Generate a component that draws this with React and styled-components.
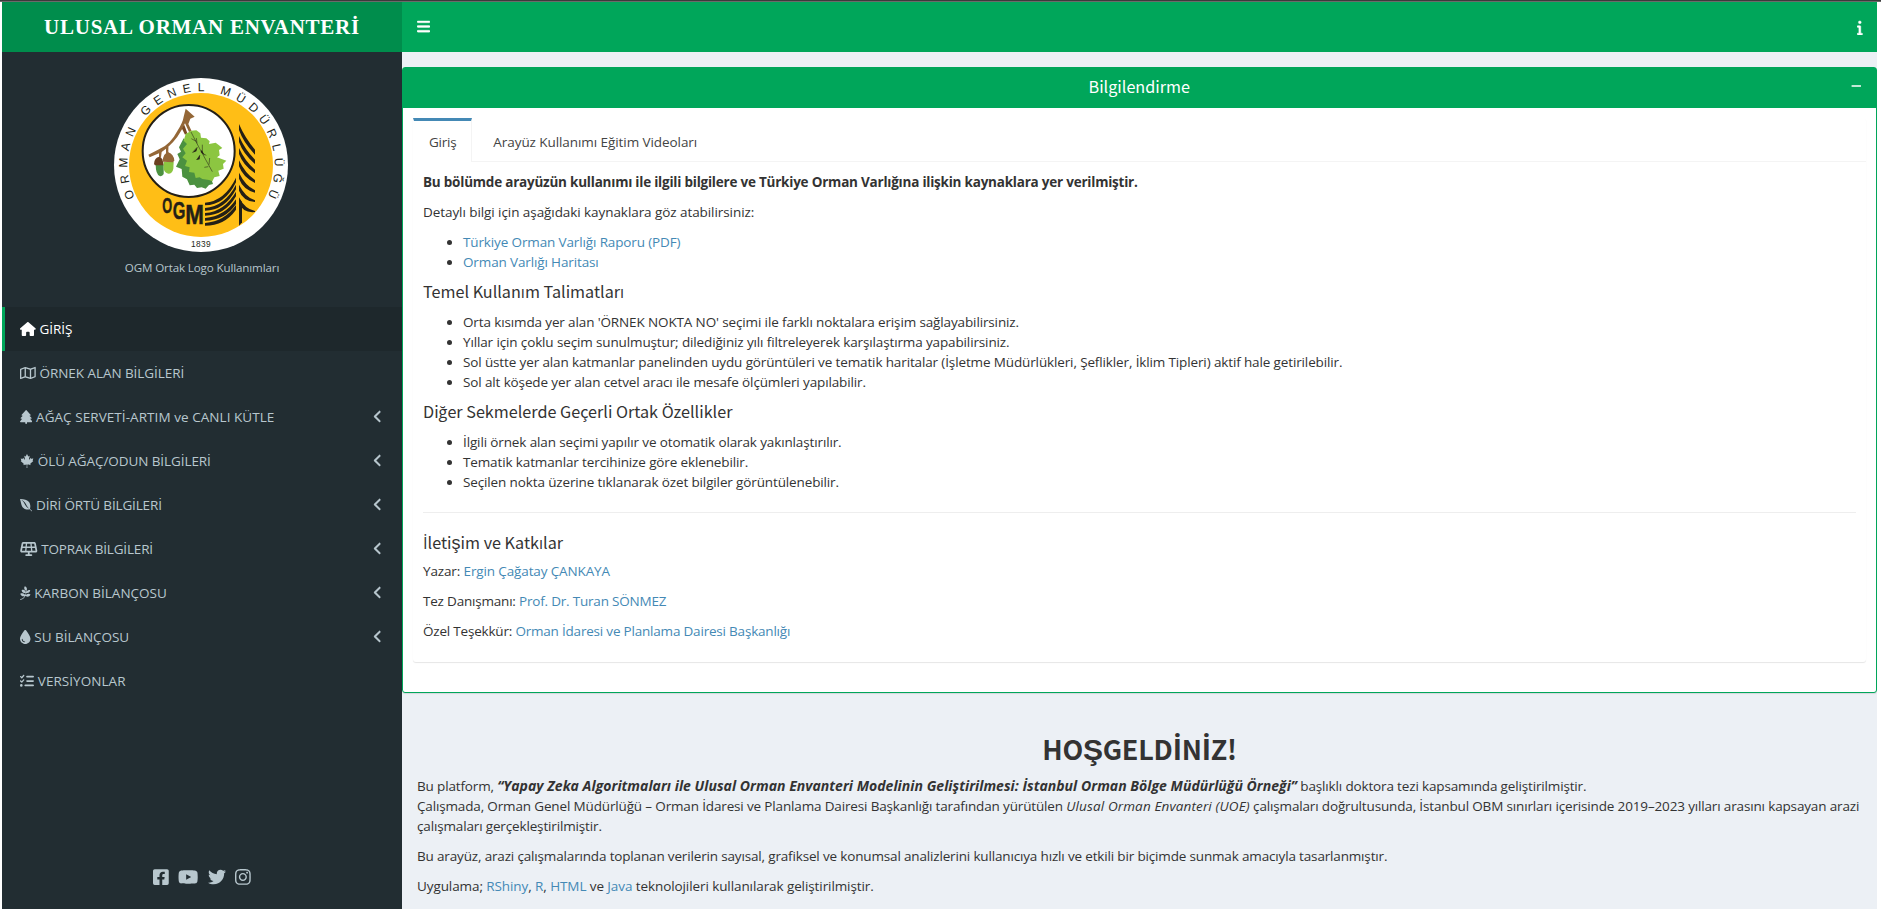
import React from "react";
import styled, { createGlobalStyle } from "styled-components";
import {
  FaBars, FaInfo, FaMinus, FaHouse, FaRegMap, FaTree, FaCanadianMapleLeaf, FaEnvira,
  FaSolarPanel, FaPagelines, FaDroplet, FaListCheck, FaAngleLeft, FaYoutube, FaTwitter, FaInstagram,
} from "react-icons/fa6";
import { FaFacebookSquare } from "react-icons/fa";

const body = '"Open Sans", "Noto Sans", sans-serif';
const display = '"Noto Sans CJK JP", "Open Sans", sans-serif';

const GlobalStyle = createGlobalStyle`
  * { box-sizing: border-box; }
  body {
    margin: 0;
    height: 909px;
    overflow: hidden;
    background: #fff;
    color: #333;
    font: 13.5px/20px ${body};
    letter-spacing: -0.13px;
  }
`;

const Page = styled.div`
  height: 909px;
  display: flex;
  flex-direction: column;
  padding: 0 4px 0 2px;
`;
const TopEdge = styled.div`
  flex: none;
  height: 2px;
  margin: 0 -4px 0 -2px;
  background: #3b3b3b;
  border-bottom: 1px solid #6a6a6a;
`;
const Header = styled.header`
  flex: none;
  height: 50px;
  display: flex;
  background: #00a65a;
  color: #fff;
`;
const Brand = styled.div`
  width: 400px;
  background: #008d4c;
  text-align: center;
  font: 700 21px/50px "Liberation Serif", serif;
  letter-spacing: 0.74px;
`;
const NavBar = styled.nav`
  flex: 1;
  display: flex;
  align-items: center;
  justify-content: space-between;
  padding: 0 14px 0 15px;
`;
/* $units is the glyph's viewBox width on its 512-unit height */
const Glyph = styled.span`
  display: inline-flex;
  svg {
    display: block;
    width: ${(p) => ((p.$size || 14) * (p.$units || 512)) / 512}px;
    height: ${(p) => p.$size || 14}px;
  }
`;
const MenuToggle = styled(Glyph)`
  margin-bottom: 1px;
  svg {
    stroke: currentColor;
    stroke-width: 12;
  }
`;
const InfoGlyph = styled(Glyph)`
  svg {
    stroke: currentColor;
    stroke-width: 16;
  }
`;
const Chevron = styled(Glyph)`
  margin-bottom: 2px;
  svg {
    stroke: currentColor;
    stroke-width: 8;
  }
`;
const Main = styled.div`
  flex: 1;
  min-height: 0;
  display: flex;
`;

/* Sidebar */
const Sidebar = styled.aside`
  width: 400px;
  flex: none;
  display: flex;
  flex-direction: column;
  background: #222d32;
  color: #b8c7ce;
`;
const LogoPanel = styled.div`
  height: 255px;
  padding-top: 25px;
  display: flex;
  flex-direction: column;
  align-items: center;
`;
const LogoArt = styled.svg`
  width: 176px;
  height: 176px;
  margin-right: 2px;
`;
const Caption = styled.div`
  margin-top: 5px;
  font-size: 11.6px;
  letter-spacing: -0.13px;
`;
const Menu = styled.ul`
  list-style: none;
  margin: 0;
  padding: 0;
`;
const MenuItem = styled.li`
  height: 44px;
  display: flex;
  align-items: center;
  gap: 3.8px;
  padding: 0 20px 0 15px;
  border-left: 3px solid ${(p) => (p.$active ? "#00a65a" : "transparent")};
  background: ${(p) => (p.$active ? "#1e282c" : "transparent")};
  color: ${(p) => (p.$active ? "#fff" : "#b8c7ce")};
`;
const MenuLabel = styled.span`
  flex: 1;
  line-height: 20px;
  letter-spacing: ${(p) => p.$track}px;
`;
const Social = styled.div`
  margin-top: auto;
  margin-bottom: 23px;
  display: flex;
  justify-content: center;
  gap: 9.3px;
`;

/* Content */
const Content = styled.main`
  flex: 1;
  min-width: 0;
  background: #ecf0f5;
  padding-top: 15px;
`;
const Box = styled.section`
  height: 626px;
  border: 1px solid #00a65a;
  border-radius: 3px;
  background: #fff;
  box-shadow: 0 1px 1px rgba(0, 0, 0, 0.1);
`;
const BoxHeader = styled.div`
  height: 40px;
  display: flex;
  align-items: center;
  padding: 0 15px 4px;
  background: #00a65a;
  color: #fff;
`;
const BoxTitle = styled.h3`
  flex: 1;
  margin: 0 0 0 10px;
  text-align: center;
  font: 400 16.2px/20px ${display};
  letter-spacing: 0;
`;
const BoxBody = styled.div`
  padding: 10px;
`;
const Tabs = styled.div`
  height: 544px;
  border-radius: 3px;
  box-shadow: 0 1px 1px rgba(0, 0, 0, 0.1);
`;
const TabList = styled.div`
  display: flex;
  gap: 5px;
  height: 44px;
  border-bottom: 1px solid #f4f4f4;
`;
const Tab = styled.div`
  height: 44px;
  padding: 11px 15px 0;
  border: 1px solid transparent;
  border-top: 3px solid ${(p) => (p.$active ? "#4489b5" : "transparent")};
  border-right-color: ${(p) => (p.$active ? "#f4f4f4" : "transparent")};
  background: ${(p) => (p.$active ? "#fff" : "transparent")};
  border-bottom: 0;
  color: #444;
  letter-spacing: ${(p) => (p.$active ? -0.25 : -0.07)}px;
`;
const TabPane = styled.div`
  padding: 10px;
`;
const P = styled.p`
  margin: 0 0 10px;
  letter-spacing: ${(p) => p.$track ?? -0.13}px;
`;
const Strong = styled.strong`
  letter-spacing: -0.22px;
`;
const Emphasis = styled.em`
  letter-spacing: 0.13px;
`;
const Link = styled.a`
  color: #4489b5;
`;
const List = styled.ul`
  margin: 0 0 10px;
  padding-left: 40px;
`;
const H4 = styled.h4`
  height: 19.8px;
  margin: 0 0 10px;
  font: 400 16.2px/18px ${display};
  letter-spacing: 0;
`;
const ContactHeading = styled(H4)`
  margin-bottom: 9px;
`;
const Alt = styled.span`
  font-family: ${(p) => p.$f || '"Liberation Sans"'}, sans-serif;
  font-size: ${(p) => p.$size}px;
  line-height: 1;
`;
const Rule = styled.hr`
  height: 1px;
  margin: 20px 0;
  border: 0;
  background: #eee;
`;
const Welcome = styled.section`
  padding: 39px 15px 0;
`;
const WelcomeTitle = styled.h2`
  margin: 0 0 10px;
  text-align: center;
  font: 700 27px/34px ${display};
  letter-spacing: -0.25px;
`;
const ThesisTitle = styled.em`
  font-weight: 700;
  font-size: 14px;
  letter-spacing: 0.03px;
`;

const INK = "#231f16";

function Logo() {
  const right = [168, 204, 240, 277, 314, 350, 388];
  const left = [
    [402, 330], [418, 351], [433, 372], [448, 395], [463, 412],
  ];
  return (
    <LogoArt viewBox="40 21 528 528">
      <defs>
        <path id="ring" d="M107 385 A221 221 0 1 1 501 385" />
      </defs>
      <circle cx="304" cy="285" r="261" fill="#fff" />
      <circle cx="304" cy="285" r="216" fill="#ffbe16" />
      <text fontFamily="Liberation Sans, sans-serif" fontSize="36" fill={INK}>
        <textPath href="#ring" startOffset="3" textLength="892" lengthAdjust="spacing">ORMAN GENEL MÜDÜRLÜĞÜ</textPath>
      </text>
      <circle cx="267" cy="243" r="138" fill="#fff" stroke={INK} strokeWidth="6" />
      <path fill="#4b9140" d="M252 205 L238 232 L244 245 L233 252 L240 268 L229 290 L246 297 L248 320 L262 328 L270 346 L284 344 L292 354 L306 352 L318 356 L328 345 L340 342 L334 325 L290 280 L262 215z" />
      <path fill="#7a4a22" d="M244 170 L256 194 L263 190 L254 165z" />
      <path fill="#946737" d="M258 116 L285 140 L272 146 L266 162 L276 184 L268 186 L256 160 Q236 205 206 230 L205 238 L199 236 L186 246 L184 262 L178 262 L178 250 L150 262 L146 254 L178 238 Q212 224 233 183 Q250 156 252 140z" />
      <path fill="#8cc641" d="M258 192 L275 182 L290 181 L302 190 L304 203 L320 205 L330 214 L328 222 L348 218 L358 226 L368 234 L358 240 L360 256 L352 262 L380 272 L370 282 L372 296 L356 302 L360 318 L344 322 L338 334 L328 330 L308 327 L300 322 L288 324 L284 308 L268 306 L270 292 L256 288 L262 272 L248 262 L258 250 L250 236 L262 222 L252 212z" />
      <path fill="none" stroke={INK} strokeWidth="1.6" d="M274 186 L300 236 L338 305 M275 206 L290 214 M290 204 L292 220 M278 248 L292 232 M308 224 L308 250 L320 256 M290 270 L301 256 M330 264 L328 284 M314 292 L326 290" />
      <path fill={INK} d="M279 248 L294 231 L290 244z M316 257 L303 246 L306 240z M291 270 L301 254 L300 268z" />
      <path fill="#4b9140" d="M168 284 H192 V312 Q188 320 180 318 Q168 312 168 284z" />
      <path fill="#6a4020" d="M163 282 Q164 262 179 260 Q190 262 192 286 H166z" />
      <path fill="#8cc641" d="M192 276 H222 L221 296 Q218 311 206 311 Q194 308 192 296z" />
      <path fill="#946737" d="M189 275 Q190 250 206 247 Q222 252 224 272 L220 277z M199 232 H206 V252 H199z" />
      {right.map((y, i) => (
        <path key={y} fill={INK} d={`M418 ${y - 6} Q436 ${y + 36 - i} 466 ${y + 71 - i * 6} V${y + 86 - i * 8} Q430 ${y + 48 - i} 418 ${y + 12}z`} />
      ))}
      <path fill={INK} d="M418 386 L427 396 V457 L418 467z" />
      {left.map(([a, b]) => (
        <path key={a} fill={INK} d={`M316 ${a - 4} Q375 ${a - 9} 409 ${b - 7} V${b + 7} Q375 ${a + 4} 316 ${a + 4}z`} />
      ))}
      <g fontFamily="Liberation Sans, sans-serif" fontWeight="700" fill={INK} stroke={INK} strokeWidth="1.5">
        <text transform="translate(188 428) scale(.56 1)" fontSize="68">O</text>
        <text transform="translate(219 447) scale(.66 1)" fontSize="74">G</text>
        <text transform="translate(257 461) scale(.8 1)" fontSize="84">M</text>
      </g>
      <text x="304" y="532" textAnchor="middle" fontFamily="Liberation Sans, sans-serif" fontSize="25" letterSpacing="1" fill={INK}>1839</text>
    </LogoArt>
  );
}

const MENU = [
  { icon: FaHouse, units: 576, label: "GİRİŞ", track: -0.05, active: true },
  { icon: FaRegMap, units: 576, label: "ÖRNEK ALAN BİLGİLERİ", track: -0.06 },
  { icon: FaTree, units: 448, label: "AĞAÇ SERVETİ-ARTIM ve CANLI KÜTLE", track: 0.06, more: true },
  { icon: FaCanadianMapleLeaf, units: 512, label: "ÖLÜ AĞAÇ/ODUN BİLGİLERİ", track: -0.08, more: true },
  { icon: FaEnvira, units: 448, label: "DİRİ ÖRTÜ BİLGİLERİ", track: -0.15, more: true },
  { icon: FaSolarPanel, units: 640, label: "TOPRAK BİLGİLERİ", track: -0.18, more: true },
  { icon: FaPagelines, units: 384, label: "KARBON BİLANÇOSU", track: 0, more: true },
  { icon: FaDroplet, units: 384, label: "SU BİLANÇOSU", track: -0.03, more: true },
  { icon: FaListCheck, units: 512, label: "VERSİYONLAR", track: 0.05 },
];

export default function App() {
  return (
    <Page>
      <GlobalStyle />
      <TopEdge />
      <Header>
        <Brand>ULUSAL ORMAN ENVANTERİ</Brand>
        <NavBar>
          <MenuToggle $size={15} $units={448}><FaBars /></MenuToggle>
          <InfoGlyph $size={15} $units={192}><FaInfo /></InfoGlyph>
        </NavBar>
      </Header>
      <Main>
        <Sidebar>
          <LogoPanel>
            <Logo />
            <Caption>OGM Ortak Logo Kullanımları</Caption>
          </LogoPanel>
          <Menu>
            {MENU.map(({ icon: Icon, units, label, track, active, more }) => (
              <MenuItem key={label} $active={active}>
                <Glyph $units={units}><Icon /></Glyph>
                <MenuLabel $track={track}>{label}</MenuLabel>
                {more && <Chevron $size={15} $units={320}><FaAngleLeft /></Chevron>}
              </MenuItem>
            ))}
          </Menu>
          <Social>
            <Glyph $size={18} $units={448}><FaFacebookSquare /></Glyph>
            <Glyph $size={18} $units={576}><FaYoutube /></Glyph>
            <Glyph $size={18}><FaTwitter /></Glyph>
            <Glyph $size={18} $units={448}><FaInstagram /></Glyph>
          </Social>
        </Sidebar>
        <Content>
          <Box>
            <BoxHeader>
              <BoxTitle>Bilgilendirme</BoxTitle>
              <Glyph $size={12} $units={448}><FaMinus /></Glyph>
            </BoxHeader>
            <BoxBody>
              <Tabs>
                <TabList>
                  <Tab $active>Giriş</Tab>
                  <Tab>Arayüz Kullanımı Eğitim Videoları</Tab>
                </TabList>
                <TabPane>
                  <P><Strong>Bu bölümde arayüzün kullanımı ile ilgili bilgilere ve Türkiye Orman Varlığına ilişkin kaynaklara yer verilmiştir.</Strong></P>
                  <P $track={-0.07}>Detaylı bilgi için aşağıdaki kaynaklara göz atabilirsiniz:</P>
                  <List>
                    <li><Link>Türkiye Orman Varlığı Raporu (PDF)</Link></li>
                    <li><Link>Orman Varlığı Haritası</Link></li>
                  </List>
                  <H4>Temel Kullanım Talimatları</H4>
                  <List>
                    <li>Orta kısımda yer alan 'ÖRNEK NOKTA NO' seçimi ile farklı noktalara erişim sağlayabilirsiniz.</li>
                    <li>Yıllar için çoklu seçim sunulmuştur; dilediğiniz yılı filtreleyerek karşılaştırma yapabilirsiniz.</li>
                    <li>Sol üstte yer alan katmanlar panelinden uydu görüntüleri ve tematik haritalar (İşletme Müdürlükleri, Şeflikler, İklim Tipleri) aktif hale getirilebilir.</li>
                    <li>Sol alt köşede yer alan cetvel aracı ile mesafe ölçümleri yapılabilir.</li>
                  </List>
                  <H4>Diğer Sekmelerde Geçerli Ortak Özellikler</H4>
                  <List>
                    <li>İlgili örnek alan seçimi yapılır ve otomatik olarak yakınlaştırılır.</li>
                    <li>Tematik katmanlar tercihinize göre eklenebilir.</li>
                    <li>Seçilen nokta üzerine tıklanarak özet bilgiler görüntülenebilir.</li>
                  </List>
                  <Rule />
                  <ContactHeading><Alt $f='"Open Sans"' $size={16.5}>İ</Alt>leti<Alt $size={18}>ş</Alt>im ve Katkılar</ContactHeading>
                  <P $track={-0.13}>Yazar: <Link>Ergin Çağatay ÇANKAYA</Link></P>
                  <P $track={-0.2}>Tez Danışmanı: <Link>Prof. Dr. Turan SÖNMEZ</Link></P>
                  <P $track={-0.2}>Özel Teşekkür: <Link>Orman İdaresi ve Planlama Dairesi Başkanlığı</Link></P>
                </TabPane>
              </Tabs>
            </BoxBody>
          </Box>
          <Welcome>
            <WelcomeTitle>
              HO<Alt $size={30}>Ş</Alt>GELD<Alt $f='"Open Sans"' $size={28}>İ</Alt>N<Alt $f='"Open Sans"' $size={28}>İ</Alt>Z!
            </WelcomeTitle>
            <P $track={-0.15}>
              Bu platform, <ThesisTitle>“Yapay Zeka Algoritmaları ile Ulusal Orman Envanteri Modelinin Geliştirilmesi: İstanbul Orman Bölge Müdürlüğü Örneği”</ThesisTitle> başlıklı doktora tezi kapsamında geliştirilmiştir.
              <br />
              Çalışmada, Orman Genel Müdürlüğü – Orman İdaresi ve Planlama Dairesi Başkanlığı tarafından yürütülen <Emphasis>Ulusal Orman Envanteri (UOE)</Emphasis> çalışmaları doğrultusunda, İstanbul OBM sınırları içerisinde 2019–2023 yılları arasını kapsayan arazi çalışmaları gerçekleştirilmiştir.
            </P>
            <P $track={-0.16}>Bu arayüz, arazi çalışmalarında toplanan verilerin sayısal, grafiksel ve konumsal analizlerini kullanıcıya hızlı ve etkili bir biçimde sunmak amacıyla tasarlanmıştır.</P>
            <P $track={-0.09}>Uygulama; <Link>RShiny</Link>, <Link>R</Link>, <Link>HTML</Link> ve <Link>Java</Link> teknolojileri kullanılarak geliştirilmiştir.</P>
          </Welcome>
        </Content>
      </Main>
    </Page>
  );
}
